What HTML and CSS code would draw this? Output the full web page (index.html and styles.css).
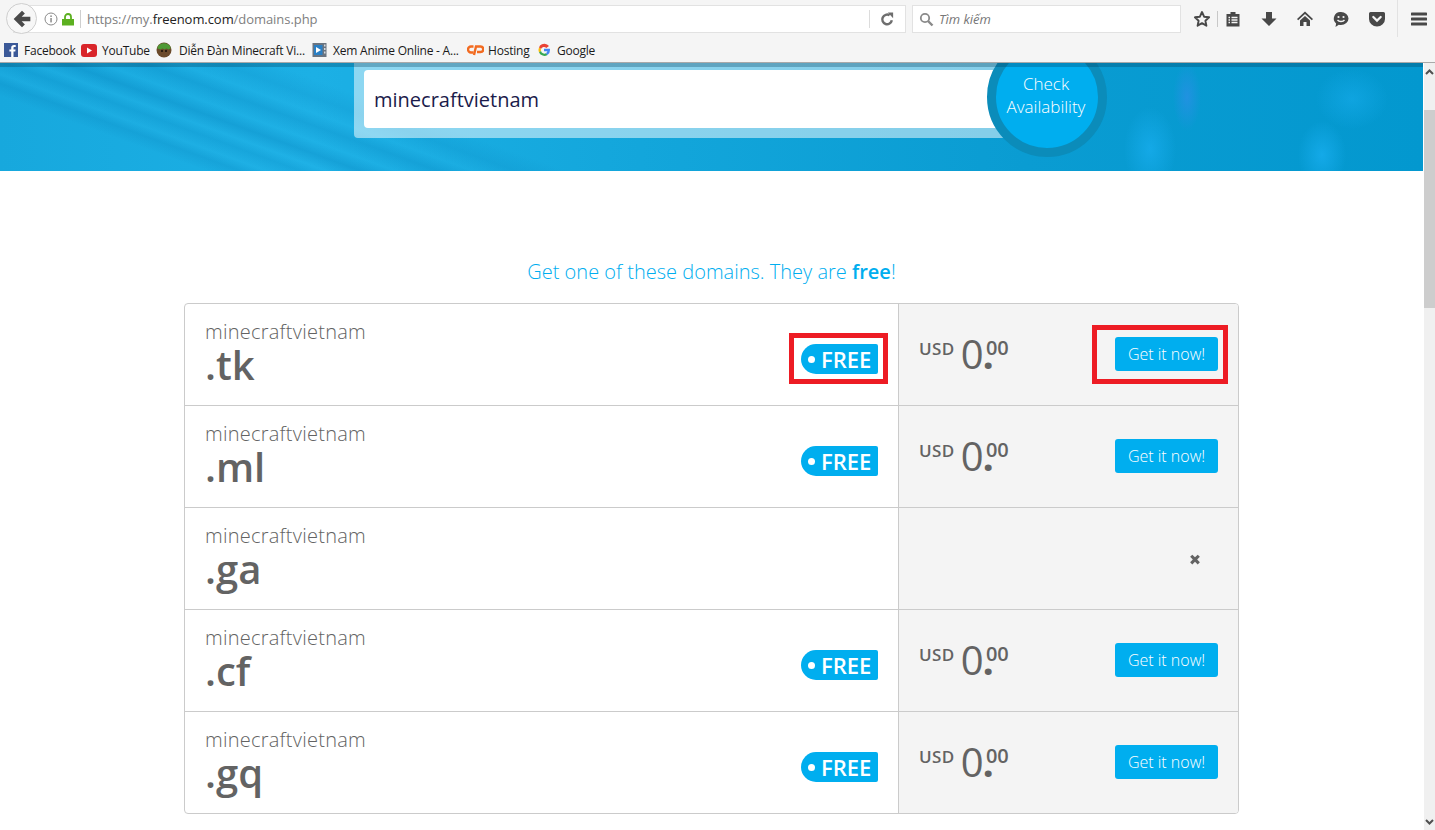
FILE: index.html
```html
<!DOCTYPE html>
<html lang="vi">
<head>
<meta charset="utf-8">
<title>Freenom</title>
<link rel="stylesheet" href="styles.css">
</head>
<body>
<header class="chrome">
  <div class="toolbar">
    <div class="urlwrap">
      <span class="back"><svg width="20" height="20" viewBox="0 0 18 18"><path d="M1.500 9L9 1.500l2.600 2.600L8.700 7H16.500v4H8.700l2.900 2.900L9 16.500z" fill="#4a4a4a"/></svg></span>
      <div class="urlbar">
        <svg class="info" width="14" height="14" viewBox="0 0 14 14"><circle cx="7" cy="7" r="6" fill="none" stroke="#8a8a8a"/><rect x="6.300" y="6" width="1.500" height="4.400" fill="#8a8a8a"/><rect x="6.300" y="3.400" width="1.500" height="1.600" fill="#8a8a8a"/></svg>
        <svg class="lock" width="12" height="13" viewBox="0 0 12 13"><path d="M0 6h12v6.500H0z" fill="#5cb020"/><path d="M3 6V4a3 3 0 0 1 6 0v2" fill="none" stroke="#5cb020" stroke-width="1.800"/></svg>
        <span class="url">https://my.<b>freenom.com</b>/domains.php</span>
        <span class="reload"><svg width="14" height="14" viewBox="0 0 16 16"><path d="M13.500 9.500A5.500 5.500 0 1 1 11 3.800" fill="none" stroke="#6e6e6e" stroke-width="2.800"/><path d="M9 0.500h6v6.500z" fill="#6e6e6e"/></svg></span>
      </div>
    </div>
    <div class="searchbar">
      <svg width="15" height="15" viewBox="0 0 15 15"><circle cx="6" cy="6" r="4.200" fill="none" stroke="#8a8a8a" stroke-width="1.800"/><path d="M9 9l4.500 4.500" stroke="#8a8a8a" stroke-width="2.400"/></svg>
      <span>Tìm kiếm</span>
    </div>
    <div class="tools">
      <svg class="star" width="18" height="18" viewBox="0 0 18 18"><path d="M9 2l2.100 4.700 5 .6-3.700 3.400 1 5L9 13.200 4.600 15.700l1-5L1.900 7.300l5-.6z" fill="none" stroke="#484848" stroke-width="1.900" stroke-linejoin="round"/></svg>
      <span class="sep"></span>
      <svg class="clip" width="16" height="16" viewBox="0 0 16 16"><path d="M1.500 3h4V1h5v2h4v12.500h-13z" fill="#484848"/><path d="M3.500 6.500h1.500M3.500 9h1.500M3.500 11.500h1.500M6.500 6.500h6M6.500 9h6M6.500 11.500h6" stroke="#f5f5f5" stroke-width="1.300"/></svg>
      <svg class="down" width="18" height="18" viewBox="0 0 18 18"><path d="M6 2h6v6.500h4.500L9 16 1.500 8.500H6z" fill="#484848"/></svg>
      <svg class="home" width="18" height="18" viewBox="0 0 18 18"><path d="M9 1.500L1 9l1.200 1.200L9 4l6.800 6.200L17 9z" fill="#484848"/><path d="M9 6l-5 4.600V16h3.500v-4h3v4H14v-5.400z" fill="#484848"/></svg>
      <svg class="chat" width="18" height="18" viewBox="0 0 18 18"><path d="M9 2a7.500 6.500 0 0 1 0 13c-.8 0-1.500-.1-2.200-.3L3.500 17l.6-3.600A6.500 6.500 0 0 1 9 2z" fill="#484848"/><circle cx="6.500" cy="7" r="1.100" fill="#f5f5f5"/><circle cx="11.500" cy="7" r="1.100" fill="#f5f5f5"/><path d="M5.500 10c1.500 2 5.500 2 7 0" fill="none" stroke="#f5f5f5" stroke-width="1.300"/></svg>
      <svg class="pocket" width="18" height="18" viewBox="0 0 18 18"><path d="M2.500 2h13A1.500 1.500 0 0 1 17 3.500V9A8 7.500 0 0 1 1 9V3.500A1.500 1.500 0 0 1 2.500 2z" fill="#484848"/><path d="M5.300 7l3.700 3.600L12.700 7" fill="none" stroke="#f5f5f5" stroke-width="2.200" stroke-linecap="round"/></svg>
      <span class="sep sep-tall"></span>
      <svg class="menu" width="16" height="16" viewBox="0 0 16 16"><path d="M1 1.500h14a1 1 0 0 1 0 3H1a1 1 0 0 1 0-3zM1 6.500h14a1 1 0 0 1 0 3H1a1 1 0 0 1 0-3zM1 11.500h14a1 1 0 0 1 0 3H1a1 1 0 0 1 0-3z" fill="#484848"/></svg>
    </div>
  </div>
  <nav class="bookmarks">
    <a class="bm bm-fb"><svg width="14" height="14" viewBox="0 0 14 14"><rect width="14" height="14" fill="#3b5998"/><path d="M9.500 14V8.500h1.800l.3-2.100H9.500V5c0-.6.2-1 1-1h1.200V2.100c-.2 0-.9-.1-1.700-.1C8.300 2 7.200 3 7.200 4.800v1.600H5.400v2.100h1.800V14z" fill="#fff"/></svg>Facebook</a>
    <a class="bm bm-yt"><svg width="16" height="13" viewBox="0 0 16 13"><rect width="16" height="13" rx="3" fill="#d9252a"/><path d="M6 3.500v6l5-3z" fill="#fff"/></svg>YouTube</a>
    <a class="bm bm-mc"><svg width="16" height="16" viewBox="0 0 16 16"><circle cx="8" cy="8" r="7.500" fill="#6b4a2b"/><path d="M1.500 5a7.500 7.500 0 0 1 13 0v1.500l-2 1-2-1-2 1-2-1-2 1-3-1z" fill="#4f9a35"/><rect x="5" y="8" width="2" height="2" fill="#2a1c10"/><rect x="9" y="8" width="2" height="2" fill="#2a1c10"/></svg>Diễn Đàn Minecraft Vi...</a>
    <a class="bm bm-an"><svg width="15" height="16" viewBox="0 0 15 16"><rect x=".5" y="1" width="14" height="14" fill="#6a7480"/><rect x="2" y="3" width="8.500" height="10" fill="#2a7fc4"/><path d="M4 5v6l5-3z" fill="#fff"/><path d="M12 2.500h1.500v2H12zM12 6h1.500v2H12zM12 9.500h1.500v2H12z" fill="#d5d9dd"/></svg>Xem Anime Online - A...</a>
    <a class="bm bm-cp"><svg width="17" height="12" viewBox="0 0 17 12"><path d="M6.500 2.500H4a3 3 0 0 0 0 6h2.500" fill="none" stroke="#f26b21" stroke-width="2.400"/><path d="M7 11l2-8.500h4.500a2.500 2.500 0 0 1 0 5.500H10" fill="none" stroke="#f26b21" stroke-width="2.400"/></svg>Hosting</a>
    <a class="bm bm-g"><svg width="14" height="14" viewBox="0 0 14 14"><path d="M12 3A6 6 0 0 0 3 2.500L2 4.500l2 1.500A3.200 3.200 0 0 1 9.300 5z" fill="#ea4335"/><path d="M2 4.500a6 6 0 0 0 0 5L4 8a3.200 3.200 0 0 1 0-2z" fill="#fbbc05"/><path d="M2 9.500A6 6 0 0 0 10.500 12L9 10.200A3.400 3.400 0 0 1 4 8z" fill="#34a853"/><path d="M13 7c0-.4 0-.8-.1-1.200H7v2.400h3.400c-.2.800-.7 1.500-1.400 2L10.500 12A6 6 0 0 0 13 7z" fill="#4285f4"/></svg>Google</a>
  </nav>
</header>
<div class="viewport">
  <main class="page">
    <section class="hero">
      <form class="panel">
        <div class="field">minecraftvietnam</div>
        <div class="check">Check<br>Availability</div>
      </form>
    </section>
    <h2 class="heading">Get one of these domains. They are <b>free</b>!</h2>
    <div class="results">
      <div class="row">
        <div class="name"><div class="label"><div class="sld">minecraftvietnam</div><div class="tld">.tk</div></div><span class="tag"><i></i>FREE</span><span class="mark mark-tag"></span></div>
        <div class="offer"><span class="price"><span class="cur">USD</span><span class="big">0<b>.</b></span><sup>00</sup></span><a class="btn">Get it now!</a><span class="mark mark-btn"></span></div>
      </div>
      <div class="row">
        <div class="name"><div class="label"><div class="sld">minecraftvietnam</div><div class="tld">.ml</div></div><span class="tag"><i></i>FREE</span></div>
        <div class="offer"><span class="price"><span class="cur">USD</span><span class="big">0<b>.</b></span><sup>00</sup></span><a class="btn">Get it now!</a></div>
      </div>
      <div class="row">
        <div class="name"><div class="label"><div class="sld">minecraftvietnam</div><div class="tld">.ga</div></div></div>
        <div class="offer"><svg class="cross" width="14" height="13" viewBox="0 0 12 12"><path d="M1.500 3.500l2-2L6 4l2.500-2.500 2 2L8 6l2.500 2.500-2 2L6 8l-2.500 2.500-2-2L4 6z" fill="#636363"/></svg></div>
      </div>
      <div class="row">
        <div class="name"><div class="label"><div class="sld">minecraftvietnam</div><div class="tld">.cf</div></div><span class="tag"><i></i>FREE</span></div>
        <div class="offer"><span class="price"><span class="cur">USD</span><span class="big">0<b>.</b></span><sup>00</sup></span><a class="btn">Get it now!</a></div>
      </div>
      <div class="row">
        <div class="name"><div class="label"><div class="sld">minecraftvietnam</div><div class="tld">.gq</div></div><span class="tag"><i></i>FREE</span></div>
        <div class="offer"><span class="price"><span class="cur">USD</span><span class="big">0<b>.</b></span><sup>00</sup></span><a class="btn">Get it now!</a></div>
      </div>
    </div>
  </main>
  <aside class="scrollbar">
    <span class="arrow"><svg width="9" height="6" viewBox="0 0 9 6"><path d="M1 5l3.500-3.500L8 5" fill="none" stroke="#505050" stroke-width="2"/></svg></span>
    <span class="thumb"></span>
    <span class="arrow arrow-down"><svg width="9" height="6" viewBox="0 0 9 6"><path d="M1 1l3.500 3.500L8 1" fill="none" stroke="#505050" stroke-width="2"/></svg></span>
  </aside>
</div>
</body>
</html>
```
FILE: styles.css
```css
* { box-sizing: border-box; }
html, body { margin: 0; height: 100%; overflow: hidden; background: #fff; }
body { width: 1435px; height: 830px; font-family: "Open Sans", sans-serif; display: flex; flex-direction: column; }
svg { display: block; flex: none; }

/* browser chrome */
.chrome { height: 63px; flex: none; background: #f5f5f5; border-bottom: 1px solid #a9a9a9; }
.toolbar { height: 38px; display: flex; align-items: flex-start; padding: 5px 0 0 5px; }
.urlwrap { position: relative; width: 901px; height: 28px; margin-right: 6px; }
.urlbar { height: 28px; margin-left: 8px; padding: 0 2px 0 30px; background: #fff; border: 1px solid #e2e2e2; display: flex; align-items: center; }
.back { position: absolute; left: 1px; top: -2px; width: 31px; height: 31px; border-radius: 50%; background: #f7f7f7; border: 1px solid #cfcfcf; display: flex; align-items: center; justify-content: center; z-index: 1; }
.info { margin-right: 4px; }
.lock { margin-right: 6px; }
.url { font-size: 13px; letter-spacing: -.06px; color: #808080; padding-left: 6px; border-left: 1px solid #cfcfcf; line-height: 18px; flex: 1; }
.url b { font-weight: 400; color: #222; }
.reload { width: 34px; height: 18px; border-left: 1px solid #dcdcdc; display: flex; align-items: center; justify-content: center; }
.searchbar { width: 269px; height: 28px; background: #fff; border: 1px solid #e2e2e2; display: flex; align-items: center; gap: 5px; padding-left: 6px; font-size: 13px; font-style: italic; color: #777; }
.tools { display: flex; align-items: center; height: 28px; flex: 1; }
.star { margin-left: 12px; }
.sep { width: 1px; height: 16px; margin-left: 6px; background: #c8c8c8; flex: none; }
.clip { margin-left: 7px; }
.down { margin-left: 19px; }
.home { margin-left: 18px; }
.chat { margin-left: 18px; }
.pocket { margin-left: 18px; }
.sep-tall { height: 37px; margin: -5px 0 0 11px; align-self: flex-start; background: #e2e2e2; }
.menu { margin-left: 13px; }

.bookmarks { height: 24px; display: flex; align-items: center; padding-left: 4px; font-size: 12px; color: #1a1a1a; }
.bm { display: flex; align-items: center; white-space: nowrap; letter-spacing: -.22px; }
.bm svg { margin-right: 6px; }
.bm-fb { width: 77px; }
.bm-yt { width: 75px; }
.bm-yt svg { margin-right: 5px; }
.bm-mc { width: 156px; }
.bm-mc svg { margin-right: 7px; }
.bm-an { width: 155px; }
.bm-cp { width: 70px; }
.bm-cp svg { margin-right: 4px; }

/* page */
.viewport { flex: 1; display: flex; min-height: 0; }
.page { width: 1423px; flex: none; overflow: hidden; }
.hero { position: relative; height: 108px; padding-left: 354px; overflow: hidden; background:
  radial-gradient(ellipse 14px 34px at 1187px 34px, rgba(50,140,235,.6), rgba(50,140,235,0)),
  radial-gradient(ellipse 26px 42px at 1150px 86px, rgba(25,175,240,.7), rgba(25,175,240,0)),
  radial-gradient(ellipse 36px 30px at 1352px 36px, rgba(25,175,240,.5), rgba(25,175,240,0)),
  radial-gradient(ellipse 24px 34px at 1322px 92px, rgba(25,175,240,.75), rgba(25,175,240,0)),
  linear-gradient(20deg, rgba(0,110,170,0) 12%, rgba(0,110,170,.16) 14%, rgba(60,190,240,.1) 15.500%, rgba(0,110,170,.14) 17.500%, rgba(60,190,240,.1) 19%, rgba(0,110,170,.22) 21%, rgba(60,190,240,.08) 23%, rgba(0,110,170,.18) 25.500%, rgba(60,190,240,.08) 27.500%, rgba(0,110,170,.12) 30%, rgba(0,110,170,0) 33%),
  linear-gradient(90deg, #17a8dd 0, #1cb0e5 22%, #13a6db 45%, #0a9cd2 72%, #0398cf 100%); }
.hero::before { content: ""; position: absolute; left: 0; right: 0; top: 0; height: 4px; background: rgba(0,60,90,.3); z-index: 2; }
.panel { position: relative; width: 690px; height: 75px; padding: 7px 10px 10px; background: rgba(255,255,255,.5); border-radius: 0 0 4px 4px; }
.field { width: 640px; height: 58px; background: #fff; border-radius: 4px; padding-left: 10px; font-size: 20px; line-height: 60px; color: #1b1b4b; }
.check { position: absolute; left: 633px; top: -26px; width: 120px; height: 120px; border-radius: 50%; border: 9px solid #0b8cba; background: #00aeef; color: #fff; font-size: 17px; font-weight: 300; line-height: 23px; padding-bottom: 5px; padding-right: 2px; display: flex; align-items: center; justify-content: center; text-align: center; }

.heading { margin: 88px 0 18px; height: 26px; font-size: 20px; line-height: 26px; font-weight: 300; text-align: center; color: #00aeef; }
.heading b { font-weight: 600; }

.results { width: 1055px; margin-left: 184px; border: 1px solid #cbcbcb; border-radius: 4px; overflow: hidden; }
.row { height: 102px; display: flex; border-top: 1px solid #cbcbcb; }
.row:first-child { height: 101px; border-top: 0; }
.name { position: relative; width: 714px; padding: 16px 20px 0; border-right: 1px solid #cbcbcb; color: #636363; display: flex; justify-content: space-between; align-items: flex-start; }
.sld { font-size: 20px; letter-spacing: .25px; line-height: 24px; font-weight: 300; }
.tld { font-size: 40px; line-height: 44px; font-weight: 600; margin-top: -1px; }
.tag { position: relative; margin-top: 24px; width: 77px; height: 30px; background: #00aeef; border-radius: 15px 2px 2px 15px; color: #fff; font-size: 22px; font-weight: 600; line-height: 30px; padding-left: 20px; }
.tag i { position: absolute; left: 7px; top: 12px; width: 7px; height: 7px; border-radius: 50%; background: #fff; }
.offer { position: relative; flex: 1; background: #f4f4f4; display: flex; justify-content: space-between; padding: 0 20px; }
.price { display: flex; align-items: flex-start; color: #636363; margin-top: 21px; height: 60px; }
.cur { font-size: 17px; letter-spacing: .4px; line-height: 24px; font-weight: 600; margin: 12px 6px 0 0; }
.big { font-size: 40px; line-height: 44px; margin-top: 7px; }
.big b { font-weight: 700; margin-left: -1px; }
.price sup { font-size: 20px; line-height: 24px; font-weight: 600; vertical-align: baseline; margin: 11px 0 0 -8px; }
.btn { width: 103px; height: 34px; margin-top: 33px; background: #00aeef; color: #fff; border-radius: 3px; font-size: 16px; font-weight: 300; line-height: 34px; text-align: center; }
.cross { margin: 45px 16px 0 auto; }

.mark { position: absolute; border: 5px solid #ed1c24; pointer-events: none; }
.mark-tag { right: 10px; top: 29px; width: 99px; height: 51px; }
.mark-btn { right: 10px; top: 21px; width: 136px; height: 59px; }

.scrollbar { width: 11px; flex: none; margin-left: 1px; background: #f0f0f0; display: flex; flex-direction: column; }
.arrow { height: 17px; display: flex; align-items: center; justify-content: center; flex: none; }
.thumb { display: block; flex: none; margin-top: 30px; height: 198px; background: #cdcdcd; }
.arrow-down { margin-top: auto; }
```
